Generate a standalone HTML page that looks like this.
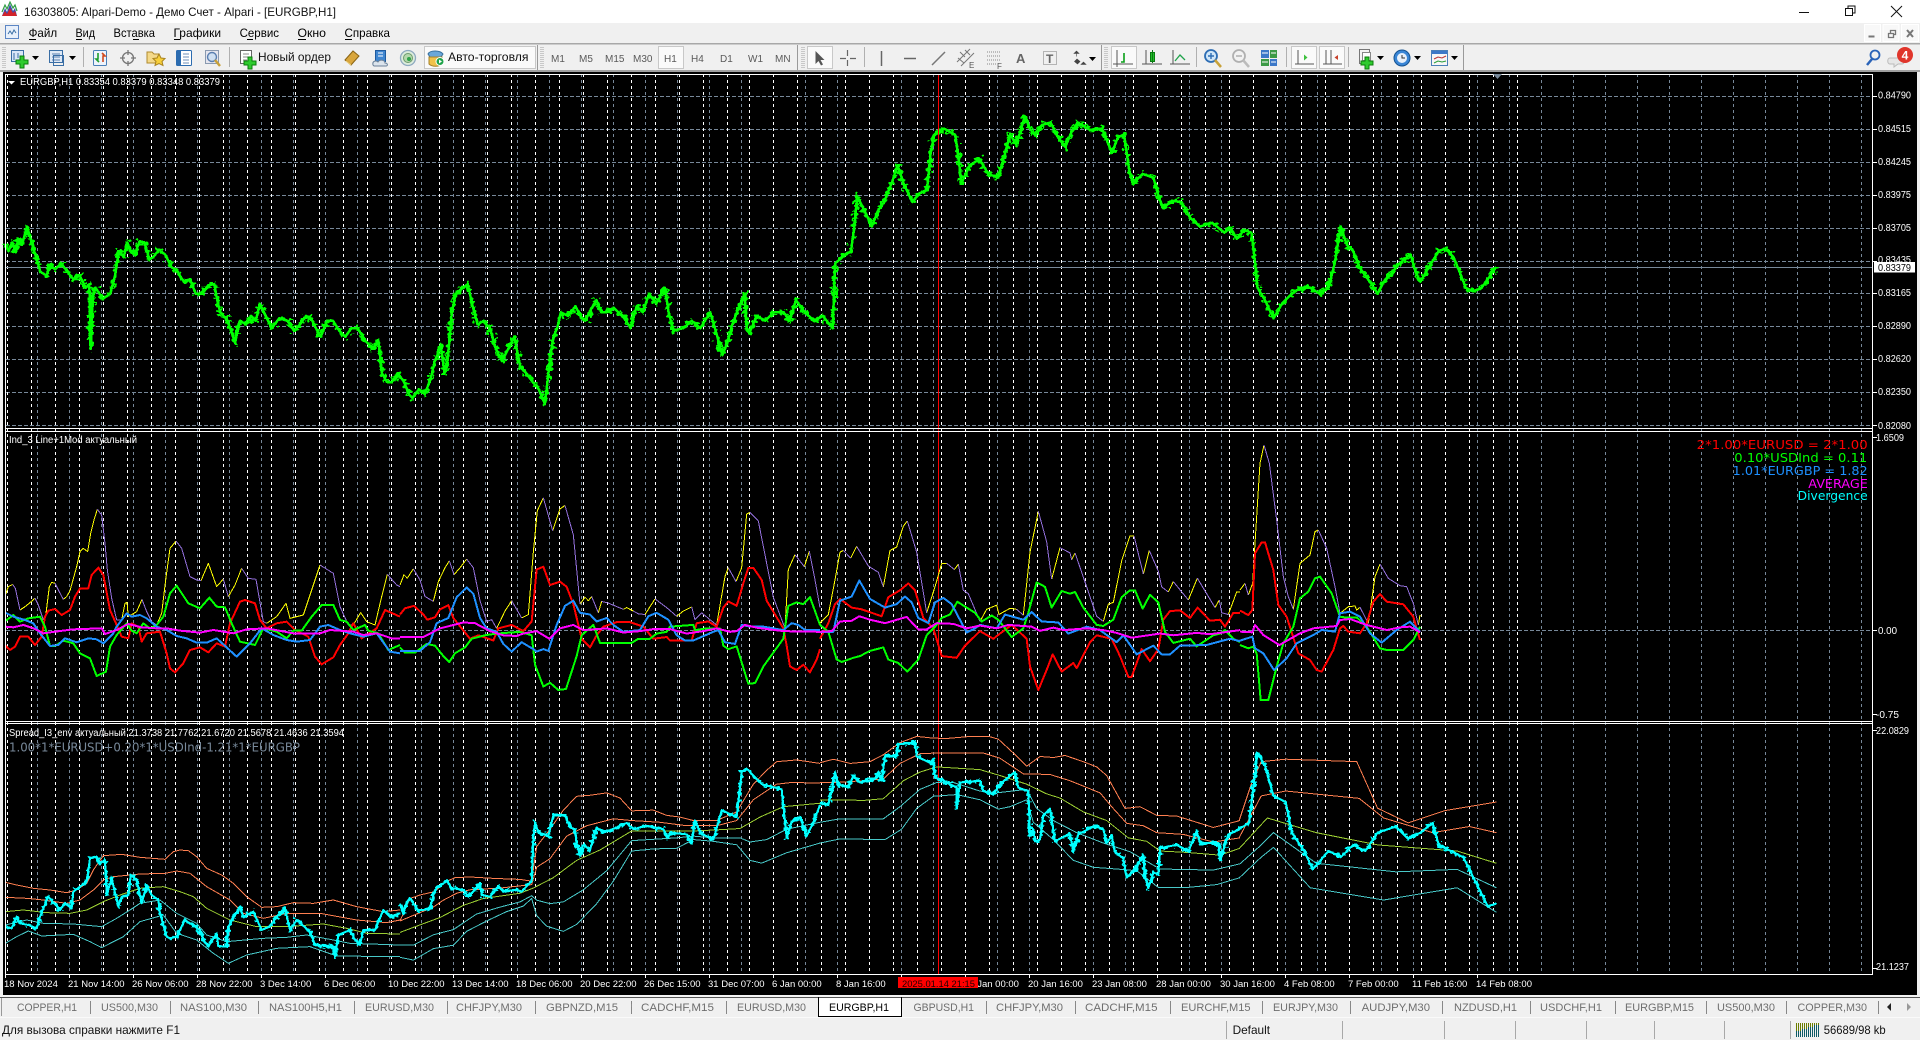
<!DOCTYPE html>
<html><head><meta charset="utf-8"><title>Alpari</title>
<style>
html,body{margin:0;padding:0;background:#f0f0f0;overflow:hidden}
svg{display:block}
text{font-family:"Liberation Sans","Noto Sans CJK SC",sans-serif}
.n path,.n polyline{fill:none;vector-effect:non-scaling-stroke;stroke-linejoin:round}
.ax{fill:#fff;font-size:9.5px}
.tab{fill:#6e6e6e;font-size:11px}
.tf{fill:#5a5a5a;font-size:10px}
.mn{fill:#000;font-size:12px}
.dv{font-family:"DejaVu Sans",sans-serif;font-size:12px}
</style></head><body>
<svg xmlns="http://www.w3.org/2000/svg" width="1920" height="1040" viewBox="0 0 1920 1040">
<defs>
<g id="plus"><path d="M-2-6h4v4h4v4h-4v4h-4v-4h-4v-4h4z" fill="#2ecb2e" stroke="#0b7d0b" stroke-width="1"/></g>
<path id="dn" d="M0 0h7l-3.500 4z" fill="#000"/>
<filter id="jg" x="0" y="60" width="1920" height="380" filterUnits="userSpaceOnUse" color-interpolation-filters="sRGB"><feTurbulence type="fractalNoise" baseFrequency=".2 .28" numOctaves="2" seed="4" result="t"/><feDisplacementMap in="SourceGraphic" in2="t" scale="12" xChannelSelector="R" yChannelSelector="G"/></filter>
<filter id="jc" x="0" y="720" width="1920" height="260" filterUnits="userSpaceOnUse" color-interpolation-filters="sRGB"><feTurbulence type="fractalNoise" baseFrequency=".22 .3" numOctaves="2" seed="9" result="t"/><feDisplacementMap in="SourceGraphic" in2="t" scale="8" xChannelSelector="R" yChannelSelector="G"/></filter>
</defs>
<rect width="1920" height="1040" fill="#f0f0f0"/>
<!-- title bar -->
<rect width="1920" height="23" fill="#fff"/>
<path d="M2 16l3-8 2 4 3-8 3 7 2-3 2 8z" fill="#3b4fb0"/>
<path d="M2 16l3-5 2 3 3-6 3 5 2-2 2 5z" fill="#d2232a"/>
<path d="M2 12l3-7 2 4 3-7 3 6 2-3 2 6" fill="none" stroke="#2f9e44" stroke-width="1.200"/>
<text x="24" y="16" font-size="12" fill="#111" textLength="312" lengthAdjust="spacingAndGlyphs">16303805: Alpari-Demo - Демо Счет - Alpari - [EURGBP,H1]</text>
<path d="M1799 12.500h10" stroke="#111" fill="none"/>
<path d="M1845.500 8.500h7v7h-7zM1848 8.500v-2.500h7v7h-2.500" stroke="#111" fill="none"/>
<path d="M1891 6l11 11M1902 6l-11 11" stroke="#111" fill="none"/>
<!-- menu bar -->
<g fill="none" stroke="#5c86c4"><rect x="5.500" y="25.500" width="13" height="13" fill="#e8f0fb"/><path d="M8 34l2-3 2 3 2-4 2 3" stroke="#3a6ea5"/></g>
<g class="mn">
<text class="mn" x="28.600" y="37" textLength="28.500" lengthAdjust="spacingAndGlyphs">Файл</text>
<text class="mn" x="75.500" y="37" textLength="19.500" lengthAdjust="spacingAndGlyphs">Вид</text>
<text class="mn" x="113.500" y="37" textLength="41.500" lengthAdjust="spacingAndGlyphs">Вставка</text>
<text class="mn" x="173.500" y="37" textLength="47.500" lengthAdjust="spacingAndGlyphs">Графики</text>
<text class="mn" x="239.600" y="37" textLength="39.400" lengthAdjust="spacingAndGlyphs">Сервис</text>
<text class="mn" x="297.500" y="37" textLength="28.500" lengthAdjust="spacingAndGlyphs">Окно</text>
<text class="mn" x="344.500" y="37" textLength="45.500" lengthAdjust="spacingAndGlyphs">Справка</text>
</g>
<path d="M29 39.500h7M76 39.500h6M133 39.500h6M174 39.500h6M247 39.500h6M298 39.500h8M345 39.500h7" stroke="#000"/>
<!-- mdi -->
<g fill="#f8f8f8" stroke="#fff"><rect x="1864.500" y="24.500" width="16" height="17"/><rect x="1883" y="24.500" width="16" height="17"/><rect x="1901.500" y="24.500" width="17" height="17"/></g>
<path d="M1868.500 36.500h6" stroke="#777" stroke-width="2"/>
<path d="M1888.500 33.500h5v4h-5zM1890.500 33v-2.500h5v4h-1.500" fill="none" stroke="#777" stroke-width="1.300"/>
<path d="M1907 30l6 7M1913 30l-6 7" stroke="#777" stroke-width="2"/>
<!-- toolbar -->
<rect x="0" y="43" width="1920" height="1.500" fill="#a8a8a8"/>
<rect x="0" y="70" width="1920" height="2" fill="#a0a0a0"/>
<g stroke="#a0a0a0" stroke-dasharray="1 1" fill="none">
<path d="M3 47V68M5 47V68M541 47V68M543 47V68M802 47V68M804 47V68M1105 47V68M1107 47V68"/></g>
<g stroke="#b0b0b0" fill="none"><path d="M83.500 47V67M229.500 47V67M864.500 47V67M1196.500 47V67M1286.500 47V67M1348.500 47V67"/></g>
<g stroke="#9a9a9a" fill="none"><path d="M537.500 45V70M797.500 45V70M1101.500 45V70M1463.500 45V70"/></g>
<!-- buttons pressed -->
<g fill="#fafafa" stroke="#c8c8c8">
<rect x="424.500" y="46.500" width="111" height="22"/><rect x="658.500" y="46.500" width="25" height="22"/>
<rect x="807.500" y="46.500" width="25" height="22"/><rect x="1111.500" y="46.500" width="25" height="22"/>
<rect x="1291.500" y="46.500" width="25" height="22"/><rect x="1319.500" y="46.500" width="25" height="22"/></g>
<!-- new chart -->
<rect x="11.500" y="50.500" width="12" height="11" fill="#d9e6f7" stroke="#3a6ea5"/><path d="M14 53v7M18 53v5" stroke="#3a6ea5"/>
<use href="#plus" x="22" y="62"/><use href="#dn" x="32" y="56"/>
<rect x="49.500" y="50.500" width="13" height="12" fill="#dfe9f6" stroke="#3a6ea5"/><path d="M52 54h8M52 57h8M52 60h8" stroke="#5a7fb0"/><rect x="53.500" y="55.500" width="10" height="10" fill="none" stroke="#3a6ea5"/><use href="#dn" x="69" y="56"/>
<!-- market watch -->
<rect x="93.500" y="50.500" width="13" height="15" rx="1" fill="#eef4fc" stroke="#4a7fb8"/><path d="M98 53v6h-2l3 3" fill="none" stroke="#1e9e2e" stroke-width="1.600"/><path d="M103 62v-6h2l-3-3" fill="none" stroke="#d24a1e" stroke-width="1.600"/>
<!-- crosshair -->
<circle cx="128" cy="58" r="5.500" fill="none" stroke="#777" stroke-width="1.300"/><path d="M128 50v5M128 61v5M120 58h5M131 58h5" stroke="#777" stroke-width="1.300"/>
<!-- folder star -->
<path d="M147 52h5l2 2h5v9h-12z" fill="#f4d98a" stroke="#b08a2e"/><path d="M159 54l2 4 4 .5-3 3 1 4-4-2-4 2 1-4-3-3 4-.5z" fill="#f7cf3a" stroke="#a8821e"/>
<!-- navigator -->
<rect x="176.500" y="50.500" width="15" height="15" rx="1" fill="#fff" stroke="#2c6cb0"/><rect x="177" y="51" width="4" height="14" fill="#2c6cb0"/><path d="M183 54h6M183 57h6M183 60h6M183 63h6" stroke="#6c8fb8"/>
<!-- tester -->
<rect x="205.500" y="50.500" width="13" height="13" fill="#e6e6ee" stroke="#8a9ab0"/><circle cx="212" cy="57" r="4.500" fill="#cfe0f2" stroke="#5a7fb0" stroke-width="1.400"/><path d="M215 60l5 6" stroke="#c9a13a" stroke-width="2.500"/>
<!-- new order -->
<rect x="240.500" y="50.500" width="11" height="13" fill="#fff" stroke="#666"/><path d="M243 54h6M243 57h6M243 60h4" stroke="#888"/><use href="#plus" x="250" y="63"/>
<text x="258" y="61" font-size="12" fill="#111" textLength="73" lengthAdjust="spacingAndGlyphs">Новый ордер</text>
<!-- gold -->
<path d="M345 60l8-9 6 5-8 9z" fill="#d9a63c" stroke="#8a6414"/><path d="M346 61l5 4" stroke="#f2d27a"/>
<!-- cloud book -->
<rect x="375.500" y="50.500" width="10" height="11" fill="#3f86d0" stroke="#1e5a9e"/><path d="M378 53h5M378 56h5" stroke="#fff"/><path d="M373 65c-1-4 3-5 5-3 2-3 7-2 7 1 3 0 3 3 1 3h-12z" fill="#dce4ec" stroke="#6b8199"/>
<!-- signal -->
<circle cx="408" cy="58" r="7.500" fill="#dcecdc" stroke="#8ea9c0" stroke-width="1.300"/><circle cx="408" cy="58" r="4.500" fill="#b5d7ad" stroke="#6d9a6d"/><circle cx="409" cy="59" r="2" fill="#2fa34a"/>
<!-- autotrade -->
<path d="M428 54c2-4 12-4 15 0l-2 3h-11z" fill="#6aa7d8" stroke="#37709e"/><path d="M429 57h13v7c-3 3-10 3-13 0z" fill="#f0c24a" stroke="#a5812a"/><circle cx="440" cy="61.500" r="4" fill="#1fa34a" stroke="#fff"/><path d="M439 59.500l3 2-3 2z" fill="#fff"/>
<text x="448" y="61" font-size="12" fill="#111" textLength="80.500" lengthAdjust="spacingAndGlyphs">Авто-торговля</text>
<!-- timeframes -->
<text class="tf" x="551" y="62">M1</text><text class="tf" x="579" y="62">M5</text><text class="tf" x="605" y="62">M15</text><text class="tf" x="633" y="62">M30</text>
<text class="tf" x="664" y="62">H1</text><text class="tf" x="691" y="62">H4</text><text class="tf" x="720" y="62">D1</text><text class="tf" x="748" y="62">W1</text><text class="tf" x="775" y="62">MN</text>
<!-- cursor & lines -->
<path d="M815.500 51l0 13 3-3 2.500 4.500 2-1-2.500-4.500h4z" fill="#555"/>
<path d="M847.500 50v6M847.500 60v6M840 58.500h6M850 58.500h6" stroke="#666" stroke-width="1.200" fill="none"/>
<path d="M881.500 51v15" stroke="#666" stroke-width="1.500"/>
<path d="M904 58.500h12" stroke="#666" stroke-width="1.500"/>
<path d="M932 65l13-13" stroke="#777" stroke-width="1.500"/>
<path d="M957 62l13-13M961 66l13-13M960 52l5 5M965 50l5 5M958 58l6 5" stroke="#777" fill="none"/><text x="969" y="68" font-size="8" fill="#555">E</text>
<path d="M987 52h14M987 56h14M987 60h14M987 64h10" stroke="#888" stroke-dasharray="1 1"/><text x="997" y="69" font-size="8" fill="#555">F</text>
<text x="1016" y="63" font-size="13" font-weight="bold" fill="#666">A</text>
<rect x="1043.500" y="51.500" width="13" height="13" fill="none" stroke="#777" stroke-dasharray="1 1"/><text x="1046" y="63" font-size="12" font-weight="bold" fill="#666">T</text>
<path d="M1074 53.500l2.500-2.500 2.500 2.500zM1076.500 53.500v3M1077 59l3 2.500-2.500 2.500-3-2.500zM1081 64.500l2.500-2.500 2.500 2.500z" fill="#444" stroke="#444" stroke-width=".6"/><use href="#dn" x="1089" y="57"/>
<!-- chart type -->
<path d="M1117 50v14h13M1113 64h20M1117 64v3" stroke="#555" fill="none"/><path d="M1124 53v9h-3" stroke="#0aa01a" stroke-width="1.600" fill="none"/>
<path d="M1146 50v14h13M1142 64h20" stroke="#555" fill="none"/><rect x="1150.500" y="52.500" width="4" height="9" fill="#22c02a" stroke="#0a7a12"/><path d="M1152.500 50v13" stroke="#0a7a12"/>
<path d="M1173 50v14h13M1170 64h20" stroke="#555" fill="none"/><path d="M1175 61l5-6 5 5" stroke="#1fa34a" stroke-width="1.300" fill="none"/>
<!-- zoom -->
<circle cx="1211" cy="56" r="6" fill="#cfe6f9" stroke="#2d6db4" stroke-width="1.800"/><path d="M1208 56h6M1211 53v6" stroke="#2d6db4" stroke-width="1.400"/><path d="M1215 60l6 7" stroke="#c8a23a" stroke-width="2.500"/>
<circle cx="1239" cy="56" r="6" fill="#f2f2f2" stroke="#b0b0b0" stroke-width="1.800"/><path d="M1236 56h6" stroke="#aaa" stroke-width="1.400"/><path d="M1243 60l6 7" stroke="#bbb" stroke-width="2.500"/>
<rect x="1261" y="50" width="8" height="8" fill="#3c78c8"/><rect x="1270" y="50" width="7" height="8" fill="#3c9a46"/><rect x="1261" y="59" width="8" height="7" fill="#3c9a46"/><rect x="1270" y="59" width="7" height="7" fill="#3c78c8"/><path d="M1262 53h6M1271 53h5M1262 62h6M1271 62h5" stroke="#fff"/>
<!-- shift -->
<path d="M1298 50v14h12M1295 64h19" stroke="#555" fill="none"/><path d="M1304 54.500v6l3.500-3z" fill="#3ec03e"/>
<path d="M1326 50v14h12M1323 64h19M1331 50v14" stroke="#555" fill="none"/><path d="M1338 55v5l-3.500-2.500z" fill="#c8402a"/>
<!-- templates -->
<rect x="1359.500" y="49.500" width="10" height="14" fill="#f4f4f4" stroke="#777"/><rect x="1362.500" y="52.500" width="8" height="8" fill="#fff" stroke="#888"/><use href="#plus" x="1367" y="63"/><use href="#dn" x="1377" y="56"/>
<circle cx="1402" cy="58" r="8" fill="#3a86d6" stroke="#15528f"/><circle cx="1402" cy="58" r="5" fill="#e9f1fa"/><path d="M1402 55v3h3" stroke="#333" fill="none"/><use href="#dn" x="1414" y="56"/>
<rect x="1431.500" y="50.500" width="16" height="15" fill="#f6f6f6" stroke="#4a7fb8"/><rect x="1432" y="51" width="15" height="3" fill="#3c78c8"/><path d="M1434 59l4-2 4 1 4-2" stroke="#b33" fill="none"/><path d="M1434 63l4-2 4 1 4-1" stroke="#2a9e3a" fill="none"/><use href="#dn" x="1451" y="56"/>
<!-- search, notifications -->
<circle cx="1875" cy="55" r="4.500" fill="none" stroke="#2a63b8" stroke-width="1.800"/><path d="M1872 59l-5 6" stroke="#2a63b8" stroke-width="2.500"/>
<path d="M1890 58h12c3 0 3 6 0 6h-4l-4 3v-3h-4c-3 0-3-6 0-6z" fill="#e6e6e6" stroke="#bbb"/>
<circle cx="1905" cy="55" r="8" fill="#e0352b"/><text x="1905" y="59.500" font-size="12" font-weight="bold" fill="#fff" text-anchor="middle">4</text>

<!-- chart area -->
<rect x="3" y="72" width="1914" height="923" fill="#000"/>
<!-- grid -->
<path fill="none" stroke="#778899" stroke-dasharray="3 3" d="M37.500 74V974M69.500 74V974M101.500 74V974M133.500 74V974M165.500 74V974M197.500 74V974M229.500 74V974M261.500 74V974M293.500 74V974M325.500 74V974M357.500 74V974M389.500 74V974M421.500 74V974M453.500 74V974M485.500 74V974M517.500 74V974M549.500 74V974M581.500 74V974M613.500 74V974M645.500 74V974M677.500 74V974M709.500 74V974M741.500 74V974M773.500 74V974M805.500 74V974M837.500 74V974M869.500 74V974M901.500 74V974M933.500 74V974M965.500 74V974M997.500 74V974M1029.500 74V974M1061.500 74V974M1093.500 74V974M1125.500 74V974M1157.500 74V974M1189.500 74V974M1221.500 74V974M1253.500 74V974M1285.500 74V974M1317.500 74V974M1349.500 74V974M1381.500 74V974M1413.500 74V974M1445.500 74V974M1477.500 74V974M1509.500 74V974M1541.500 74V974M1573.500 74V974M1605.500 74V974M1637.500 74V974M1669.500 74V974M1701.500 74V974M1733.500 74V974M1765.500 74V974M1797.500 74V974M1829.500 74V974M1861.500 74V974"/>
<path fill="none" stroke="#778899" stroke-dasharray="4 2" d="M6 96.500H1872M6 129.500H1872M6 162.500H1872M6 195.500H1872M6 228.500H1872M6 261.500H1872M6 293.500H1872M6 326.500H1872M6 359.500H1872M6 392.500H1872M6 425.500H1872M6 630.500H1872"/>
<path fill="none" stroke="#fff" stroke-dasharray="3 3" d="M7.500 74V974M31.500 74V974M55.500 74V974M79.500 74V974M103.500 74V974M127.500 74V974M151.500 74V974M175.500 74V974M199.500 74V974M223.500 74V974M247.500 74V974M271.500 74V974M295.500 74V974M319.500 74V974M343.500 74V974M367.500 74V974M391.500 74V974M415.500 74V974M439.500 74V974M463.500 74V974M487.500 74V974M511.500 74V974M535.500 74V974M559.500 74V974M583.500 74V974M607.500 74V974M631.500 74V974M655.500 74V974M679.500 74V974M703.500 74V974M727.500 74V974M749.500 74V974M773.500 74V974M797.500 74V974M821.500 74V974M845.500 74V974M869.500 74V974M893.500 74V974M917.500 74V974M941.500 74V974M965.500 74V974M989.500 74V974M1013.500 74V974M1037.500 74V974M1061.500 74V974M1085.500 74V974M1109.500 74V974M1133.500 74V974M1157.500 74V974M1181.500 74V974M1205.500 74V974M1229.500 74V974M1253.500 74V974M1277.500 74V974M1301.500 74V974M1325.500 74V974M1349.500 74V974M1373.500 74V974M1397.500 74V974M1421.500 74V974M1445.500 74V974M1469.500 74V974M1493.500 74V974M1517.500 74V974"/>
<!-- price line -->
<path d="M6 267.500H1872" stroke="#778899"/>
<!-- main green -->
<g class="n" shape-rendering="crispEdges" transform="scale(1.2245)" stroke-width="2.500">
<path id="gp" stroke="#00ff00" d="M4 200L7 205L10 198L13 206L15 195L18 200L22 185L25 195L30 212L33 222L38 225L41 216L45 220L50 215L55 222L60 228L65 225L70 235L73 232L74 285L76 240L78 235L84 244L90 240L94 225L97 205L101 210L104 198L107 206L110 208L114 197L118 198L122 212L125 210L130 204L135 208L140 218L145 222L150 230L155 228L160 240L165 240L170 233L175 232L178 248L180 255L186 262L192 280L194 270L196 262L201 265L205 258L209 262L212 248L217 258L222 268L228 260L235 262L240 270L245 265L250 258L255 262L259 270L262 275L267 262L272 262L277 270L282 275L287 268L292 268L298 278L305 285L309 278L312 305L316 312L320 312L325 305L330 312L334 322L337 325L342 318L347 322L352 308L355 295L358 288L360 282L363 305L365 300L369 255L372 240L377 236L382 232L386 250L390 265L395 262L400 268L405 285L410 295L415 285L420 275L423 290L425 300L430 305L435 312L440 318L445 330L449 295L452 275L455 268L458 255L464 258L470 250L474 258L478 262L483 252L487 245L491 255L495 255L502 252L510 260L515 268L520 250L525 255L530 240L536 248L543 235L546 255L550 270L558 268L565 262L572 268L580 255L585 272L590 290L594 280L598 265L603 252L608 240L610 270L612 272L618 258L625 262L632 255L640 255L645 262L650 245L657 255L665 262L672 258L680 268L682 215L688 210L695 205L698 182L700 160L706 172L712 185L717 172L722 165L728 150L733 135L738 150L745 165L751 158L757 155L760 125L763 110L771 105L780 110L783 130L785 150L792 135L800 130L807 142L815 145L820 128L825 110L830 118L837 95L841 105L845 110L851 102L858 100L864 112L870 120L875 108L880 100L890 106L900 105L904 115L908 125L913 112L918 110L922 138L925 150L933 142L942 145L946 160L950 170L957 164L965 165L972 178L980 185L990 182L1000 190L1005 186L1010 195L1016 188L1022 190L1025 215L1027 235L1033 245L1040 260L1047 248L1055 240L1062 235L1070 235L1078 240L1085 235L1090 215L1095 185L1100 200L1105 205L1110 218L1115 225L1120 232L1125 240L1130 230L1135 225L1143 215L1152 208L1156 222L1160 230L1167 218L1175 205L1181 203L1187 210L1192 222L1197 235L1203 238L1210 235L1215 228L1222 218"/>
</g>
<g filter="url(#jg)"><g class="n" shape-rendering="crispEdges" transform="scale(1.2245)" stroke-width="3"><use href="#gp"/></g></g>
<!-- red vertical -->
<rect x="938" y="74" width="1" height="900" fill="#ff0000"/>

<!-- MIDDLE PANE -->
<!-- left part zoom 7 -->
<g class="n" shape-rendering="crispEdges" transform="translate(0,420) scale(.33333)">
<path stroke="#ffff00" stroke-width="1" d="M16 525L25 500L38 493M60 570L75 560L85 552L105 535M130 600L138 580L148 500L155 487L165 490M190 538L200 530L210 512L230 440L240 395L250 385L263 395L272 340L282 300L292 268M365 600L375 550L381 547L385 590L410 575L426 538M470 615L485 580L497 480L510 385L528 363M603 482L625 430L650 500L670 477M685 530L705 495L725 445M800 610L830 590L858 550L870 595L890 590L910 585L935 510L960 435M1060 615L1082 578L1100 605L1125 615L1145 530L1162 463"/>
<path stroke="#9370db" stroke-width="1" d="M38 493L46 505L60 570M105 535L115 555L130 600M165 490L175 510L190 538M292 268L305 285L315 370L322 450L335 535L350 600L365 600M426 538L440 575L455 605L470 615M528 363L545 385L570 470L590 480L603 482M670 477L685 530M725 445L745 475L768 478L790 605L800 610M960 435L1000 460L1020 560L1045 615L1060 615M1162 463L1190 495L1200 500"/>
<path stroke="#ff0000" stroke-width="2" d="M16 677L30 690L45 680L60 650L85 650L105 675L125 650L135 590L145 572L165 567L185 585L210 570L225 530L240 505L265 505L275 465L295 443L310 465L330 570L350 615L365 650L385 655L395 610L415 620L425 665L440 640L480 635L500 700L510 745L525 757L550 730L570 690L600 682L625 697L650 670L675 680L690 610L720 545L735 540L765 550L780 600L800 625L830 610L860 605L885 630L925 650L945 710L965 733L1000 712L1020 675L1045 640L1060 610L1085 655L1130 625L1155 570L1200 590"/>
<path stroke="#00ff00" stroke-width="2" d="M16 603L40 585L60 605L85 595L120 590L135 620L150 678L165 678L190 662L220 670L240 700L270 715L290 768L318 755L330 680L350 645L380 610L395 632L410 640L430 610L450 625L470 615L490 590L510 520L530 497L565 550L600 565L628 533L650 560L675 562L695 610L720 665L765 675L790 625L830 635L860 655L880 632L905 632L935 590L965 555L1000 555L1020 600L1040 605L1060 630L1095 615L1105 632L1135 640L1165 690L1200 675"/>
<path stroke="#1e90ff" stroke-width="2" d="M16 578L40 590L75 600L100 610L120 640L150 678L175 675L195 655L230 667L265 655L290 658L310 670L340 640L350 620L380 580L395 590L420 585L440 595L470 620L500 630L530 648L560 655L590 668L620 668L650 655L670 673L710 710L750 670L785 625L820 645L860 660L890 665L930 660L960 620L985 615L1020 630L1050 640L1090 650L1130 640L1170 695L1200 700"/>
<path stroke="#ff00ff" stroke-width="2" d="M16 620L40 622L70 615L100 625L130 640L165 635L220 628L305 625L315 642L350 630L385 612L425 622L470 625L500 625L540 632L600 638L640 630L700 640L740 628L800 625L880 640L960 640L990 630L1060 635L1090 645L1130 640L1175 655L1200 655"/>
</g>
<!-- zoom 11 -->
<g class="n" shape-rendering="crispEdges" transform="translate(400,431) scale(.33333,.34626)">
<path stroke="#ffff00" stroke-width="1" d="M0 445L12 415L22 425L40 398M100 492L115 435L135 395L148 375M162 415L180 395L200 370M290 570L315 520L335 490M365 540L385 530L400 350L412 230L430 193M458 288L480 225L495 215M540 500L555 480L565 490L575 478M595 525L605 492M670 515L680 510L700 520M735 530L765 485M830 535L850 520L875 508M950 560L975 420L985 395M1008 435L1025 395L1040 240L1050 235M1155 570L1165 400L1185 357M1213 392L1228 347"/>
<path stroke="#9370db" stroke-width="1" d="M40 398L60 430L75 478L100 492M148 375L162 415M200 370L220 395L240 490L260 550L275 545L290 570M335 490L365 540M430 193L458 288M495 215L520 300L540 500M575 478L595 525M605 492L625 497L670 515M700 520L715 528L735 530M765 485L800 510L830 535M875 508L885 545L905 525L930 545L950 560M985 395L1008 435M1050 235L1075 260L1120 480L1155 570M1185 357L1213 392M1228 347L1245 430L1260 510"/>
<path stroke="#ff0000" stroke-width="2" d="M0 530L15 512L42 505L70 530L82 545L105 538L120 515L145 503L160 540L185 570L210 600L235 590L280 605L295 570L335 560L370 578L395 550L410 400L430 392L450 445L480 435L500 450L520 500L535 560L545 600L570 625L590 590L610 565L650 552L690 552L730 565L760 600L800 595L810 605L875 605L890 555L925 550L950 565L970 510L985 492L1010 505L1030 440L1045 395L1060 395L1085 430L1100 490L1150 570L1160 620L1170 680L1190 690L1210 675L1230 697L1250 660L1260 630"/>
<path stroke="#00ff00" stroke-width="2" d="M0 625L15 640L45 640L80 615L105 620L130 650L148 667L165 642L195 625L215 600L255 590L290 585L360 580L395 590L405 675L430 738L450 727L475 748L498 745L530 650L545 590L580 560L600 612L695 612L715 600L750 600L770 585L800 580L810 565L880 560L885 575L920 570L960 570L970 620L985 630L1010 622L1045 730L1065 728L1090 680L1150 600L1165 505L1190 495L1210 500L1230 480L1260 560"/>
<path stroke="#1e90ff" stroke-width="2" d="M0 635L30 635L60 635L90 610L110 555L145 540L170 480L200 452L220 470L240 540L260 570L290 580L310 615L335 637L365 610L400 630L410 637L430 630L445 635L470 560L495 505L520 490L540 525L570 530L590 550L620 540L640 560L670 580L720 575L745 535L770 525L805 545L830 590L855 605L880 605L940 580L955 575L975 610L1005 615L1025 560L1050 565L1090 565L1150 575L1175 555L1195 560L1215 575L1260 575"/>
<path stroke="#ff00ff" stroke-width="2" d="M0 595L70 595L90 585L120 570L190 553L225 555L270 578L310 590L350 592L370 585L410 578L448 600L480 570L520 560L550 575L620 570L670 582L720 578L760 572L810 572L860 585L910 578L950 570L990 580L1010 578L1035 560L1070 568L1150 578L1260 580"/>
<!-- bottom pane -->
<path stroke="#ff7f50" stroke-width="1" d="M0 1415L30 1350L60 1340L105 1330L130 1305L165 1290L210 1288L280 1292L360 1295L395 1300L410 1200L450 1150L490 1095L530 1055L570 1052L620 1045L660 1060L695 1097L760 1095L800 1110L840 1115L880 1125L950 1125L1010 1100L1060 1020L1100 980L1130 955L1190 950L1260 960M0 1415L50 1395L100 1375L130 1355L170 1335L210 1325L300 1320L395 1310L410 1260L450 1235L500 1170L560 1140L640 1120L695 1125L780 1130L860 1140L950 1140L1010 1125L1060 1065L1130 1020L1175 1015L1260 1017"/>
<path stroke="#9acd32" stroke-width="1" d="M0 1448L50 1430L120 1405L190 1370L250 1350L360 1335L400 1320L460 1290L530 1240L600 1210L695 1155L760 1155L880 1155L950 1152L1020 1148L1080 1115L1150 1085L1260 1075"/>
<path stroke="#48c8c8" stroke-width="1" d="M0 1485L40 1485L100 1455L160 1440L230 1395L300 1375L360 1360L395 1342L410 1355L450 1365L490 1360L550 1325L620 1270L695 1183L780 1178L830 1175L880 1170L940 1175L1020 1175L1050 1187L1100 1180L1160 1150L1260 1130M0 1520L40 1528L100 1495L160 1485L200 1445L260 1415L320 1388L370 1372L395 1350L410 1400L440 1430L490 1445L530 1425L590 1365L640 1300L695 1213L760 1207L830 1205L880 1180L940 1185L1010 1195L1050 1240L1085 1248L1160 1218L1260 1190"/>
</g>
<!-- zoom 12 -->
<g class="n" shape-rendering="crispEdges" transform="translate(820,431) scale(.33333,.34626)">
<path stroke="#ffff00" stroke-width="1" d="M0 555L25 530L45 430L60 350L70 345M92 367L110 333M190 450L210 345L230 335L250 275L262 260M320 525L345 450L365 383L380 382M403 400L415 385M480 550L500 515L530 503L537 530L570 512L590 515M610 532L630 350L655 232M695 428L720 337M755 372L765 352M850 550L865 500L880 495L905 375L930 303L942 303M970 413L988 345M1045 465L1060 435M1105 488L1132 425M1185 510L1198 488M1225 530L1250 465L1260 465"/>
<path stroke="#9370db" stroke-width="1" d="M70 345L92 367M110 333L145 390L175 408L190 450M262 260L290 350L320 525M380 382L403 400M415 385L430 460L445 470L480 550M590 515L610 532M655 232L680 320L695 428M720 337L750 352L755 372M765 352L800 450L830 535L850 550M942 303L970 413M988 345L1015 405L1025 450L1045 465M1060 435L1105 488M1132 425L1185 510M1198 488L1205 525L1225 530"/>
<path stroke="#ff0000" stroke-width="2" d="M0 600L25 555L45 500L60 485L95 510L125 515L185 535L205 480L240 460L265 440L285 460L310 540L340 570L365 650L410 655L435 620L480 578L520 600L540 585L575 560L620 600L630 680L655 748L680 690L698 645L725 695L760 670L770 685L810 610L830 590L875 600L900 650L925 710L935 710L965 630L990 665L1015 630L1030 545L1050 520L1080 518L1110 540L1133 510L1170 548L1200 545L1215 565L1240 525L1260 525"/>
<path stroke="#00ff00" stroke-width="2" d="M0 560L25 580L50 660L65 667L100 655L120 650L150 635L190 625L205 660L235 670L262 695L295 660L320 590L350 560L365 540L390 530L412 493L440 510L465 525L485 550L515 533L535 545L575 595L610 570L625 525L650 437L675 450L695 510L725 462L750 470L765 465L790 510L830 560L850 563L880 545L905 480L930 460L945 460L968 513L990 473L1015 495L1035 580L1060 612L1110 600L1130 622L1180 590L1200 585L1215 575L1240 600L1260 610"/>
<path stroke="#1e90ff" stroke-width="2" d="M0 580L40 580L60 490L95 478L118 432L150 485L195 510L230 500L255 478L275 495L295 540L325 555L345 495L370 482L395 500L440 582L465 570L480 560L530 570L555 530L610 545L635 523L665 550L715 553L745 585L800 565L840 575L890 610L910 590L950 645L1000 620L1025 645L1050 645L1080 620L1160 618L1210 605L1230 600L1260 607"/>
<path stroke="#ff00ff" stroke-width="2" d="M0 580L35 578L60 550L95 548L118 535L150 545L195 555L260 537L295 573L320 573L350 555L400 557L440 570L480 562L530 570L565 560L635 565L660 577L700 568L730 575L800 570L850 575L890 583L935 597L1020 585L1060 590L1130 583L1170 587L1260 575"/>
<path stroke="#ff7f50" stroke-width="1" d="M0 958L40 948L90 960L150 955L190 935L240 900L290 882L340 887L380 888L440 883L510 883L535 890L580 930L620 968L660 940L700 943L735 937L790 955L830 970L860 995L915 1090L960 1085L1010 1110L1070 1112L1130 1130L1180 1145L1260 1125M0 1015L50 1015L130 1010L190 1005L240 960L300 932L350 930L490 930L540 945L610 990L690 992L750 1010L840 1045L875 1085L920 1133L970 1140L1010 1160L1090 1165L1180 1187L1260 1175"/>
<path stroke="#9acd32" stroke-width="1" d="M0 1065L60 1065L130 1067L190 1062L250 1010L300 985L350 970L480 978L540 995L620 1020L680 1048L720 1060L790 1100L860 1125L925 1175L980 1185L1020 1213L1100 1217L1200 1225L1260 1205"/>
<path stroke="#48c8c8" stroke-width="1" d="M0 1130L60 1120L190 1120L240 1085L300 1035L350 1015L400 1015L480 1040L530 1045L620 1035L650 1090L700 1125L770 1160L850 1190L930 1215L1020 1265L1180 1268L1260 1250M0 1190L60 1178L195 1180L245 1150L290 1090L340 1055L410 1050L480 1065L535 1092L570 1085L620 1065L640 1130L700 1180L760 1240L820 1260L890 1265L950 1270L1015 1318L1105 1318L1190 1310L1260 1290"/>
</g>
<!-- zoom 10 right portion -->
<g class="n" shape-rendering="crispEdges" transform="translate(1200,420) scale(.33333)">
<path stroke="#ffff00" stroke-width="1" d="M120 510L135 490M145 525L158 490L165 370L180 130L192 75M280 568L300 430L330 405L345 335L355 330M420 580L445 560L465 558L470 570L480 562M505 610L525 470L540 432M655 615L660 585"/>
<path stroke="#9370db" stroke-width="1" d="M135 490L145 525M192 75L208 130L230 300L250 470L265 530L280 568M355 330L380 385L405 500L420 580M480 562L505 610M540 432L565 475L600 497L620 500L640 550L655 615"/>
<path stroke="#ff0000" stroke-width="2" d="M120 572L145 585L157 570L165 400L185 367L195 367L220 450L235 555L260 590L295 700L330 720L350 750L365 755L400 690L420 625L430 618L445 635L480 640L500 610L520 545L540 522L560 545L610 553L640 590L660 660"/>
<path stroke="#00ff00" stroke-width="2" d="M120 675L145 685L160 680L170 700L182 840L205 840L230 740L250 670L280 620L300 535L325 515L345 475L360 470L395 520L420 590L440 593L470 592L500 620L540 685L560 690L610 690L640 660L660 620"/>
<path stroke="#1e90ff" stroke-width="2" d="M120 662L157 650L165 685L190 700L222 750L260 715L290 670L340 645L365 630L405 635L420 580L450 575L480 590L510 640L545 668L590 630L630 605L660 635"/>
<path stroke="#ff00ff" stroke-width="2" d="M120 635L157 637L165 615L190 645L238 675L300 640L340 625L410 618L420 600L450 597L500 615L560 630L600 622L630 620L660 637"/>
</g>
<!-- bottom left zoom 9 -->
<g class="n" shape-rendering="crispEdges" transform="translate(0,700) scale(.33333)">
<path stroke="#ff7f50" stroke-width="1" d="M16 547L50 555L100 565L150 570L200 578L230 570L260 550L280 510L310 467L365 463L420 472L495 478L520 455L540 450L565 452L590 470L620 505L665 525L700 550L740 590L785 622L830 620L880 608L940 610L1000 600L1070 620L1150 635L1200 630M16 592L80 595L130 600L200 610L240 600L280 570L310 540L340 530L420 522L495 520L530 513L570 520L620 560L690 600L730 640L790 655L860 640L960 640L1070 660L1160 668L1200 660"/>
<path stroke="#9acd32" stroke-width="1" d="M16 635L70 630L140 638L210 640L260 630L310 605L360 585L420 565L490 560L540 575L580 590L620 625L690 660L770 680L860 680L970 672L1040 685L1100 700L1200 702"/>
<path stroke="#48c8c8" stroke-width="1" d="M16 675L80 660L130 670L220 672L305 680L350 655L390 630L420 610L480 600L530 640L590 670L620 705L680 725L790 715L860 712L920 705L1000 720L1050 730L1200 735M16 730L50 710L85 693L125 708L220 703L270 725L305 743L370 710L420 665L490 645L530 700L590 720L640 760L685 790L740 765L830 745L930 740L1010 768L1200 770"/>
</g>
<!-- bottom right (overview coords) -->
<g class="n" shape-rendering="crispEdges" transform="scale(1.2245)">
<path stroke="#ff7f50" stroke-width="1" d="M1012 670L1022 640L1030 622L1050 620L1108 622L1125 660L1150 672L1180 662L1222 655M1012 684L1030 650L1050 646L1110 652L1130 668L1170 680L1200 675L1222 680"/>
<path stroke="#9acd32" stroke-width="1" d="M1012 693L1035 668L1075 680L1125 690L1190 695L1222 705"/>
<path stroke="#48c8c8" stroke-width="1" d="M1012 706L1030 690L1040 680L1075 705L1140 712L1190 710L1222 725M1012 717L1030 700L1040 692L1070 725L1130 735L1190 725L1222 745"/>
</g>
<!-- cyan thick: solid base -->
<g class="n" shape-rendering="crispEdges" transform="translate(400,431) scale(.33333,.34626)" stroke-width="2"><path id="c1" stroke="#00ffff" d="M0 1365L10 1395L20 1360L30 1350L55 1385L90 1380L100 1340L110 1320L140 1300L155 1320L190 1325L205 1345L225 1325L240 1305L245 1340L270 1345L295 1315L310 1330L350 1325L365 1330L395 1300L400 1180L405 1130L415 1160L435 1165L445 1170L460 1110L495 1110L510 1145L525 1150L530 1195L540 1225L550 1195L570 1210L590 1145L610 1160L650 1145L680 1132L700 1150L740 1140L790 1150L805 1175L810 1160L860 1165L875 1190L885 1125L900 1160L940 1180L955 1130L965 1095L1010 1115L1025 985L1040 975L1060 995L1085 1020L1145 1035L1160 1175L1175 1130L1200 1115L1220 1170L1240 1130L1260 1080"/></g>
<g class="n" shape-rendering="crispEdges" transform="translate(820,431) scale(.33333,.34626)" stroke-width="2"><path id="c2" stroke="#00ffff" d="M0 1075L25 1080L35 1040L45 985L55 1020L85 1030L100 995L120 1015L165 1005L175 985L185 1010L195 940L230 940L235 905L285 900L290 940L335 960L340 950L345 1000L375 1012L410 1030L410 1090L420 1015L480 1010L490 1040L520 1050L540 1020L585 985L595 1030L625 1040L630 1170L640 1150L645 1185L660 1180L670 1110L690 1090L705 1185L735 1170L750 1165L760 1215L775 1165L825 1140L850 1150L860 1190L875 1170L885 1215L910 1235L920 1290L945 1265L970 1225L975 1285L985 1320L1000 1275L1015 1280L1020 1205L1070 1195L1105 1215L1130 1155L1140 1190L1195 1190L1200 1240L1225 1165L1260 1150"/></g>
<g class="n" shape-rendering="crispEdges" transform="translate(0,700) scale(.33333)" stroke-width="2"><path id="c3" stroke="#00ffff" d="M16 682L35 685L50 650L60 670L85 675L110 685L120 650L130 625L145 590L180 630L195 610L215 625L220 575L260 545L270 475L290 470L300 490L315 480L320 585L335 535L355 620L365 590L385 585L392 525L410 540L425 610L440 555L455 585L475 600L480 640L500 710L510 715L530 710L555 660L600 690L610 720L625 740L650 700L655 738L680 740L685 680L720 620L730 650L760 635L785 690L810 680L830 650L855 625L870 690L890 660L930 695L945 735L1000 740L1005 770L1015 705L1050 690L1065 720L1080 735L1090 690L1125 690L1150 630L1170 650L1200 640"/></g>
<g class="n" shape-rendering="crispEdges" transform="scale(1.2245)" stroke-width="2"><path id="c4" stroke="#00ffff" d="M1012 677L1020 672L1027 615L1033 625L1040 650L1050 655L1055 680L1065 695L1072 710L1085 695L1095 700L1105 690L1115 695L1125 680L1140 675L1150 685L1160 680L1170 672L1175 690L1185 695L1195 700L1205 720L1215 740L1222 738"/></g>
<!-- cyan jitter -->
<g filter="url(#jc)">
<g class="n" shape-rendering="crispEdges" transform="translate(400,431) scale(.33333,.34626)" stroke-width="2.500"><use href="#c1"/></g>
<g class="n" shape-rendering="crispEdges" transform="translate(820,431) scale(.33333,.34626)" stroke-width="2.500"><use href="#c2"/></g>
<g class="n" shape-rendering="crispEdges" transform="translate(0,700) scale(.33333)" stroke-width="2.500"><use href="#c3"/></g>
<g class="n" shape-rendering="crispEdges" transform="scale(1.2245)" stroke-width="2.500"><use href="#c4"/></g>
</g>
<!-- frames -->
<g fill="none" stroke="#fff">
<path d="M5.500 74V974M1872.500 74V974M5 74.500H1873M5 428.500H1873M5 431.500H1873M5 721.500H1873M5 723.500H1873M5 974.500H1873"/>
<path d="M5.500 974V978M69.500 974V978M133.500 974V978M197.500 974V978M261.500 974V978M325.500 974V978M389.500 974V978M453.500 974V978M517.500 974V978M581.500 974V978M645.500 974V978M709.500 974V978M773.500 974V978M837.500 974V978M901.500 974V978M965.500 974V978M1029.500 974V978M1093.500 974V978M1157.500 974V978M1221.500 974V978M1285.500 974V978M1349.500 974V978M1413.500 974V978M1477.500 974V978"/>
<path d="M1873 96.500h4M1873 129.500h4M1873 162.500h4M1873 195.500h4M1873 228.500h4M1873 261.500h4M1873 293.500h4M1873 326.500h4M1873 359.500h4M1873 392.500h4M1873 425.500h4M1873 437.500h4M1873 630.500h4M1873 714.500h4M1873 730.500h4M1873 968.500h4"/>
</g>
<path d="M1493 74h9l-4.500 5z" fill="#778899"/>
<!-- chart labels -->
<path d="M8 81h7l-3.500 3.500z" fill="#fff"/>
<text x="20" y="85" fill="#fff" font-size="10" textLength="200" lengthAdjust="spacingAndGlyphs">EURGBP,H1  0.83354 0.83379 0.83348 0.83379</text>
<text x="9" y="443" fill="#fff" font-size="10" textLength="128" lengthAdjust="spacingAndGlyphs">Ind_3 Line+1Mod актуальный</text>
<text x="9" y="736" fill="#fff" font-size="10" textLength="335" lengthAdjust="spacingAndGlyphs">Spread_I3_env актуальный 21.3738 21.7762 21.6720 21.5678 21.4636 21.3594</text>
<text class="dv" x="9" y="751.500" fill="#778899" textLength="291" lengthAdjust="spacingAndGlyphs">1.00*1*EURUSD+0.20*1*USDInd-1.21*1*EURGBP</text>
<text class="dv" x="1696.700" y="449" fill="#ff0000" textLength="171" lengthAdjust="spacingAndGlyphs">2*1.00*EURUSD = 2*1.00</text>
<text class="dv" x="1734.300" y="462" fill="#00ff00" textLength="133" lengthAdjust="spacingAndGlyphs">0.10*USDInd = 0.11</text>
<text class="dv" x="1732.700" y="475" fill="#1e90ff" textLength="135" lengthAdjust="spacingAndGlyphs">1.01*EURGBP = 1.82</text>
<text class="dv" x="1808.300" y="488" fill="#ff00ff" textLength="59.500" lengthAdjust="spacingAndGlyphs">AVERAGE</text>
<text class="dv" x="1797.700" y="500" fill="#00ffff" textLength="70" lengthAdjust="spacingAndGlyphs">Divergence</text>
<!-- axis labels -->
<g fill="#fff" font-size="10">
<text x="1878" y="98.500" textLength="33" lengthAdjust="spacingAndGlyphs">0.84790</text>
<text x="1878" y="132" textLength="33" lengthAdjust="spacingAndGlyphs">0.84515</text>
<text x="1878" y="165" textLength="33" lengthAdjust="spacingAndGlyphs">0.84245</text>
<text x="1878" y="198" textLength="33" lengthAdjust="spacingAndGlyphs">0.83975</text>
<text x="1878" y="231" textLength="33" lengthAdjust="spacingAndGlyphs">0.83705</text>
<text x="1878" y="263" textLength="33" lengthAdjust="spacingAndGlyphs">0.83435</text>
<text x="1878" y="296" textLength="33" lengthAdjust="spacingAndGlyphs">0.83165</text>
<text x="1878" y="329" textLength="33" lengthAdjust="spacingAndGlyphs">0.82890</text>
<text x="1878" y="362" textLength="33" lengthAdjust="spacingAndGlyphs">0.82620</text>
<text x="1878" y="395" textLength="33" lengthAdjust="spacingAndGlyphs">0.82350</text>
<text x="1878" y="429" textLength="33" lengthAdjust="spacingAndGlyphs">0.82080</text>
<text x="1876" y="441" textLength="28" lengthAdjust="spacingAndGlyphs">1.6509</text>
<text x="1878" y="634" textLength="19" lengthAdjust="spacingAndGlyphs">0.00</text>
<text x="1876" y="718" textLength="23" lengthAdjust="spacingAndGlyphs">-0.75</text>
<text x="1876" y="734" textLength="33" lengthAdjust="spacingAndGlyphs">22.0829</text>
<text x="1876" y="970" textLength="33" lengthAdjust="spacingAndGlyphs">21.1237</text>
</g>
<rect x="1874" y="262" width="41" height="10.500" fill="#fff"/>
<text x="1878" y="271" fill="#000" font-size="10" textLength="33" lengthAdjust="spacingAndGlyphs">0.83379</text>
<!-- dates -->
<g class="ax">
<text class="ax" x="4" y="987">18 Nov 2024</text><text class="ax" x="68" y="987">21 Nov 14:00</text><text class="ax" x="132" y="987">26 Nov 06:00</text><text class="ax" x="196" y="987">28 Nov 22:00</text><text class="ax" x="260" y="987">3 Dec 14:00</text><text class="ax" x="324" y="987">6 Dec 06:00</text><text class="ax" x="388" y="987">10 Dec 22:00</text><text class="ax" x="452" y="987">13 Dec 14:00</text><text class="ax" x="516" y="987">18 Dec 06:00</text><text class="ax" x="580" y="987">20 Dec 22:00</text>
<text class="ax" x="644" y="987">26 Dec 15:00</text><text class="ax" x="708" y="987">31 Dec 07:00</text><text class="ax" x="772" y="987">6 Jan 00:00</text><text class="ax" x="836" y="987">8 Jan 16:00</text><text class="ax" x="964" y="987">16 Jan 00:00</text><text class="ax" x="1028" y="987">20 Jan 16:00</text><text class="ax" x="1092" y="987">23 Jan 08:00</text><text class="ax" x="1156" y="987">28 Jan 00:00</text><text class="ax" x="1220" y="987">30 Jan 16:00</text>
<text class="ax" x="1284" y="987">4 Feb 08:00</text><text class="ax" x="1348" y="987">7 Feb 00:00</text><text class="ax" x="1412" y="987">11 Feb 16:00</text><text class="ax" x="1476" y="987">14 Feb 08:00</text>
</g>
<rect x="898" y="977" width="80" height="11" fill="#ff0000"/>
<text x="902" y="987" fill="#200000" font-size="9.500" textLength="73" lengthAdjust="spacingAndGlyphs">2025.01.14 21:15</text>

<!-- tabs -->
<rect x="0" y="995" width="1920" height="2" fill="#f4f4f4"/>
<rect x="0" y="997" width="1920" height="1" fill="#555"/>
<rect x="0" y="998" width="1920" height="19" fill="#f0f0f0"/>
<rect x="0" y="1017" width="1920" height="23" fill="#f0f0f0"/>
<rect x="1" y="998" width="1" height="18" fill="#999"/>
<g fill="#888"><rect x="90" y="1001" width="1" height="13"/><rect x="170" y="1001" width="1" height="13"/><rect x="258" y="1001" width="1" height="13"/><rect x="354" y="1001" width="1" height="13"/><rect x="447" y="1001" width="1" height="13"/><rect x="535" y="1001" width="1" height="13"/><rect x="631" y="1001" width="1" height="13"/><rect x="726" y="1001" width="1" height="13"/><rect x="986" y="1001" width="1" height="13"/><rect x="1075" y="1001" width="1" height="13"/><rect x="1170" y="1001" width="1" height="13"/><rect x="1262" y="1001" width="1" height="13"/><rect x="1350" y="1001" width="1" height="13"/><rect x="1442" y="1001" width="1" height="13"/><rect x="1530" y="1001" width="1" height="13"/><rect x="1615" y="1001" width="1" height="13"/><rect x="1706" y="1001" width="1" height="13"/><rect x="1786" y="1001" width="1" height="13"/><rect x="1878" y="1001" width="1" height="13"/></g>
<rect x="819" y="998" width="82" height="18" fill="#fff"/>
<path d="M818.500 997V1016.500H901.500V997" fill="none" stroke="#000"/>
<path d="M820 1017H902" stroke="#000"/>
<text class="tab" x="17" y="1011" textLength="60" lengthAdjust="spacingAndGlyphs">COPPER,H1</text>
<text class="tab" x="101" y="1011" textLength="57" lengthAdjust="spacingAndGlyphs">US500,M30</text>
<text class="tab" x="180" y="1011" textLength="67" lengthAdjust="spacingAndGlyphs">NAS100,M30</text>
<text class="tab" x="269" y="1011" textLength="73" lengthAdjust="spacingAndGlyphs">NAS100H5,H1</text>
<text class="tab" x="365" y="1011" textLength="69" lengthAdjust="spacingAndGlyphs">EURUSD,M30</text>
<text class="tab" x="456" y="1011" textLength="66" lengthAdjust="spacingAndGlyphs">CHFJPY,M30</text>
<text class="tab" x="546" y="1011" textLength="72" lengthAdjust="spacingAndGlyphs">GBPNZD,M15</text>
<text class="tab" x="641" y="1011" textLength="73" lengthAdjust="spacingAndGlyphs">CADCHF,M15</text>
<text class="tab" x="737" y="1011" textLength="69" lengthAdjust="spacingAndGlyphs">EURUSD,M30</text>
<text x="829" y="1011" font-size="11" fill="#000" textLength="60" lengthAdjust="spacingAndGlyphs">EURGBP,H1</text>
<text class="tab" x="913.500" y="1011" textLength="60.500" lengthAdjust="spacingAndGlyphs">GBPUSD,H1</text>
<text class="tab" x="996" y="1011" textLength="67" lengthAdjust="spacingAndGlyphs">CHFJPY,M30</text>
<text class="tab" x="1085" y="1011" textLength="72.500" lengthAdjust="spacingAndGlyphs">CADCHF,M15</text>
<text class="tab" x="1181" y="1011" textLength="69.600" lengthAdjust="spacingAndGlyphs">EURCHF,M15</text>
<text class="tab" x="1273" y="1011" textLength="65" lengthAdjust="spacingAndGlyphs">EURJPY,M30</text>
<text class="tab" x="1361.600" y="1011" textLength="68.400" lengthAdjust="spacingAndGlyphs">AUDJPY,M30</text>
<text class="tab" x="1454" y="1011" textLength="63" lengthAdjust="spacingAndGlyphs">NZDUSD,H1</text>
<text class="tab" x="1540" y="1011" textLength="62" lengthAdjust="spacingAndGlyphs">USDCHF,H1</text>
<text class="tab" x="1625" y="1011" textLength="69" lengthAdjust="spacingAndGlyphs">EURGBP,M15</text>
<text class="tab" x="1717" y="1011" textLength="58" lengthAdjust="spacingAndGlyphs">US500,M30</text>
<text class="tab" x="1797.500" y="1011" textLength="69.500" lengthAdjust="spacingAndGlyphs">COPPER,M30</text>
<path d="M1891 1003v8l-4-4z" fill="#222"/><path d="M1907 1003v8l4-4z" fill="#999"/>
<!-- status bar -->
<rect x="0" y="1017" width="1920" height="1" fill="#fafafa"/>
<text x="2" y="1034" font-size="12" fill="#111" textLength="178" lengthAdjust="spacingAndGlyphs">Для вызова справки нажмите F1</text>
<g fill="#a8a8a8"><rect x="1226" y="1021" width="1" height="18"/><rect x="1342" y="1021" width="1" height="18"/><rect x="1444" y="1021" width="1" height="18"/><rect x="1515" y="1021" width="1" height="18"/><rect x="1586" y="1021" width="1" height="18"/><rect x="1654" y="1021" width="1" height="18"/><rect x="1724" y="1021" width="1" height="18"/><rect x="1790" y="1021" width="1" height="18"/></g>
<text x="1232.600" y="1034" font-size="12" fill="#111" textLength="37.400" lengthAdjust="spacingAndGlyphs">Default</text>
<path d="M1796.500 1023v8M1798.500 1023v8M1800.500 1023v8M1802.500 1023v8M1804.500 1023v8M1806.500 1023v8M1808.500 1023v8M1810.500 1023v8M1812.500 1023v8M1814.500 1023v8M1816.500 1023v8M1818.500 1023v8" stroke="#6b7d00"/>
<path d="M1796.500 1031v6M1798.500 1031v6M1800.500 1031v6M1802.500 1029v8M1804.500 1029v8M1806.500 1029v8M1808.500 1027v10M1810.500 1027v10M1812.500 1027v10M1814.500 1025v12M1816.500 1025v12M1818.500 1025v12" stroke="#0e5a66"/>
<text x="1823.700" y="1034" font-size="12" fill="#111" textLength="62" lengthAdjust="spacingAndGlyphs">56689/98 kb</text>
</svg>
</body></html>
